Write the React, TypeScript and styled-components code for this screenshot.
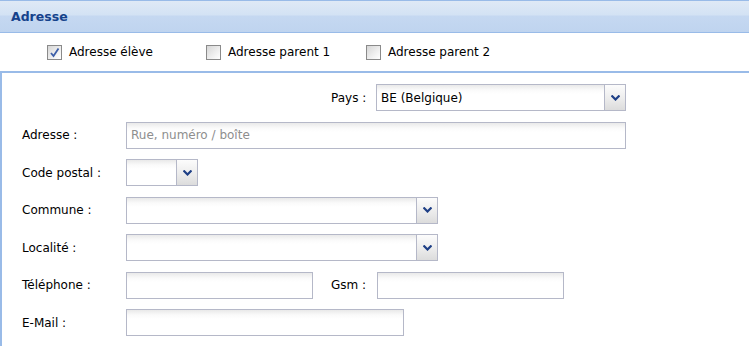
import styled, { createGlobalStyle } from "styled-components";

const GlobalStyle = createGlobalStyle`
  html, body {
    margin: 0;
    padding: 0;
    background: #fff;
  }
  body {
    font-family: "DejaVu Sans", Tahoma, sans-serif;
    font-size: 12px;
    color: #000;
  }
`;

const Panel = styled.div`
  width: 749px;
  height: 346px;
  overflow: hidden;
  border-top: 1px solid #99bbe8;
`;

const Header = styled.div`
  height: 32px;
  box-sizing: border-box;
  padding-left: 11px;
  display: flex;
  align-items: center;
  background: linear-gradient(to bottom, #dfe9f6 0, #d3e2f4 14px, #c5d8f1 15px, #bfd4ef 100%);
  border-bottom: 1px solid #99bbe8;
  color: #15428b;
  font-weight: bold;
  font-size: 12.5px;
`;

const CheckRow = styled.div`
  height: 40px;
  box-sizing: border-box;
  display: grid;
  grid-template-columns: 159px 160px auto;
  align-items: center;
  padding-left: 47px;
  border-bottom: 2px solid #99bbe8;
`;

const CheckItem = styled.label`
  display: flex;
  align-items: center;
  gap: 7px;
`;

const Box = styled.span`
  width: 13px;
  height: 13px;
  border: 1px solid #8a8a8a;
  background: linear-gradient(135deg, #d6d6d6 0, #f4f4f4 70%, #fff 100%);
  display: flex;
  align-items: center;
  justify-content: center;
`;

const Form = styled.div`
  border-left: 2px solid #99bbe8;
  padding: 11px 0 0 20px;
  display: flex;
  flex-direction: column;
  gap: 10.5px;
  height: 300px;
`;

const Row = styled.div<{ $indent?: number }>`
  display: flex;
  align-items: center;
  height: 27px;
  margin-left: ${(p) => p.$indent ?? 0}px;
`;

const Label = styled.span<{ $w: number }>`
  width: ${(p) => p.$w}px;
  flex-shrink: 0;
`;

const Field = styled.div<{ $w: number }>`
  width: ${(p) => p.$w}px;
  height: 27px;
  box-sizing: border-box;
  border: 1px solid #b5b8c8;
  background: linear-gradient(to bottom, #e9e9e9 0, #fafafa 5px, #fff 9px);
  display: flex;
  align-items: center;
  flex-shrink: 0;
`;

const Value = styled.span<{ $muted?: boolean }>`
  flex: 1;
  padding-left: 4px;
  color: ${(p) => (p.$muted ? "#8e8e8e" : "#000")};
`;

const Trigger = styled.span`
  width: 21px;
  height: 100%;
  box-sizing: border-box;
  border-left: 1px solid #b5b8c8;
  background: linear-gradient(to bottom, #fcfcfc 0, #ececec 55%, #dcdcdc 100%);
  display: flex;
  align-items: center;
  justify-content: center;
`;

const Gap = styled.span<{ $w: number }>`
  width: ${(p) => p.$w}px;
  flex-shrink: 0;
`;

const Check = () => (
  <svg width="11" height="11" viewBox="0 0 11 11">
    <path d="M2 6 L4.5 9 L9.5 1.5" fill="none" stroke="#3d5fa8" strokeWidth="1.8" />
  </svg>
);

const Chevron = () => (
  <svg width="9" height="6" viewBox="0 0 9 6">
    <path d="M0.5 0.5 L4.5 4.5 L8.5 0.5" fill="none" stroke="#1e3f86" strokeWidth="2.2" />
  </svg>
);

const Checkbox = ({ label, checked }: { label: string; checked?: boolean }) => (
  <CheckItem>
    <Box>{checked && <Check />}</Box>
    {label}
  </CheckItem>
);

const Combo = ({ w, value }: { w: number; value?: string }) => (
  <Field $w={w}>
    <Value>{value}</Value>
    <Trigger>
      <Chevron />
    </Trigger>
  </Field>
);

export default function App() {
  return (
    <Panel>
      <GlobalStyle />
      <Header>Adresse</Header>
      <CheckRow>
        <Checkbox label="Adresse élève" checked />
        <Checkbox label="Adresse parent 1" />
        <Checkbox label="Adresse parent 2" />
      </CheckRow>
      <Form>
        <Row $indent={309}>
          <Label $w={45}>Pays :</Label>
          <Combo w={250} value="BE (Belgique)" />
        </Row>
        <Row>
          <Label $w={104}>Adresse :</Label>
          <Field $w={500}>
            <Value $muted>Rue, numéro / boîte</Value>
          </Field>
        </Row>
        <Row>
          <Label $w={104}>Code postal :</Label>
          <Combo w={72} />
        </Row>
        <Row>
          <Label $w={104}>Commune :</Label>
          <Combo w={312} />
        </Row>
        <Row>
          <Label $w={104}>Localité :</Label>
          <Combo w={312} />
        </Row>
        <Row>
          <Label $w={104}>Téléphone :</Label>
          <Field $w={187} />
          <Gap $w={18} />
          <Label $w={46}>Gsm :</Label>
          <Field $w={187} />
        </Row>
        <Row>
          <Label $w={104}>E-Mail :</Label>
          <Field $w={278} />
        </Row>
      </Form>
    </Panel>
  );
}
